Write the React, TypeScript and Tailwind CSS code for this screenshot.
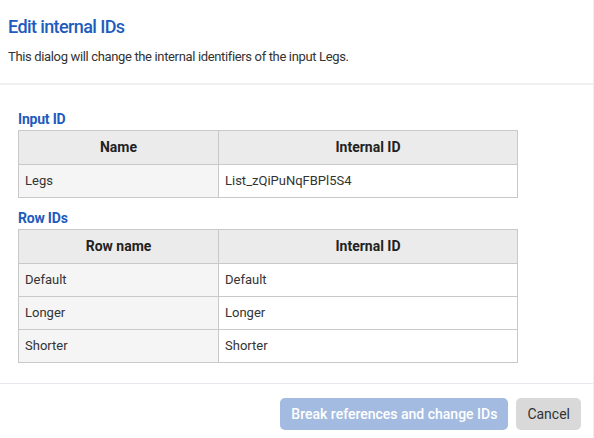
const font = { fontFamily: "Roboto, 'Noto Sans', sans-serif" };

interface Row {
  name: string;
  id: string;
}

function IdTable({ head, rows }: { head: string; rows: Row[] }) {
  return (
    <table className="w-[500px] border-collapse text-[13px] text-[#333] table-fixed">
      <thead>
        <tr className="h-[34px] bg-[#ebebeb]">
          <th className="w-[200px] border border-[#c9c9c9] font-bold text-[14px] text-[#222]">{head}</th>
          <th className="border border-[#c9c9c9] font-bold text-[14px] text-[#222]">Internal ID</th>
        </tr>
      </thead>
      <tbody>
        {rows.map((r) => (
          <tr key={r.name} className="h-[33px]">
            <td className="border border-[#c9c9c9] bg-[#f5f5f5] px-[6px]">{r.name}</td>
            <td className="border border-[#c9c9c9] bg-white px-[6px]">{r.id}</td>
          </tr>
        ))}
      </tbody>
    </table>
  );
}

export default function App() {
  return (
    <div style={font} className="w-[594px] h-[438px] bg-white border-r border-[#eeeeee] flex flex-col">
      <div className="h-[85px] px-[8px] pt-[15px] border-b-2 border-[#efefef]">
        <h1 className="text-[18px] font-medium tracking-[-0.6px] text-[#1d5bbd] leading-[24px]">Edit internal IDs</h1>
        <p className="mt-[9px] text-[13px] tracking-[-0.35px] text-[#333] leading-[18px]">
          This dialog will change the internal identifiers of the input Legs.
        </p>
      </div>
      <div className="flex-1 px-[18px] pt-[25px]">
        <div className="text-[14px] font-bold tracking-[-0.2px] text-[#1d5bbd] leading-[18px] mb-[2px]">Input ID</div>
        <IdTable head="Name" rows={[{ name: "Legs", id: "List_zQiPuNqFBPl5S4" }]} />
        <div className="mt-[11px] text-[14px] font-bold tracking-[-0.2px] text-[#1d5bbd] leading-[18px] mb-[2px]">Row IDs</div>
        <IdTable
          head="Row name"
          rows={[
            { name: "Default", id: "Default" },
            { name: "Longer", id: "Longer" },
            { name: "Shorter", id: "Shorter" },
          ]}
        />
      </div>
      <div className="h-[55px] border-t border-[#e6eaee] flex items-start justify-end gap-[8px] pt-[14px] pr-[12px]">
        <button className="h-[32px] px-[11px] rounded-[5px] bg-[#a3bbe0] text-white text-[14px] font-medium">
          Break references and change IDs
        </button>
        <button className="h-[32px] px-[11px] rounded-[5px] bg-[#d9d9d9] text-[#333] text-[14px]">
          Cancel
        </button>
      </div>
    </div>
  );
}
